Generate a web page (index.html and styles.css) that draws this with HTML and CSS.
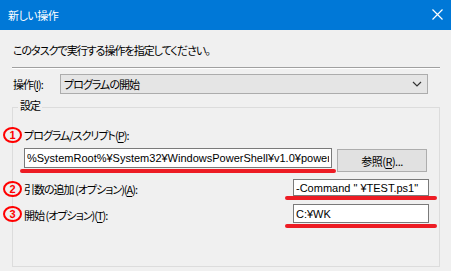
FILE: index.html
```html
<!DOCTYPE html>
<html lang="ja">
<head>
    <meta charset="UTF-8">
    <title>新しい操作</title>
    <link rel="stylesheet" href="styles.css">
</head>
<body>
    <div class="title-bar">
        <span class="title">新しい操作</span>
        <svg class="close-icon" width="11" height="11" viewBox="0 0 11 11">
            <path d="M0.5 0.5 L10.5 10.5 M10.5 0.5 L0.5 10.5" stroke="#fff" stroke-width="1.2" fill="none"/>
        </svg>
    </div>

    <div class="content">
        <div class="desc">このタスクで実行する操作を指定してください。</div>
        <div class="separator"></div>

        <div class="action-row">
            <span class="action-label">操作(<u>I</u>):</span>
            <div class="combo">
                <span>プログラムの開始</span>
                <svg class="combo-arrow" width="10" height="6" viewBox="0 0 10 6">
                    <path d="M1 1 L5 5 L9 1" stroke="#333" stroke-width="1.2" fill="none"/>
                </svg>
            </div>
        </div>

        <fieldset class="group">
            <legend>設定</legend>

            <div class="field-label">
                <span class="mark">1</span>
                プログラム/スクリプト(<u>P</u>):
            </div>
            <div class="program-row">
                <input class="text-box program-box" type="text" readonly value="%SystemRoot%¥System32¥WindowsPowerShell¥v1.0¥powershell.exe">
                <button class="browse-button">参照(<u>R</u>)...</button>
                <span class="underline line-program"></span>
            </div>

            <div class="option-row args-row">
                <span class="mark mark-row">2</span>
                <span class="option-label">引数の追加 (オプション)(<u>A</u>):</span>
                <input class="text-box option-box" type="text" readonly value="-Command &quot; ¥TEST.ps1&quot;">
                <span class="underline line-option"></span>
            </div>

            <div class="option-row start-row">
                <span class="mark mark-row">3</span>
                <span class="option-label">開始 (オプション)(<u>T</u>):</span>
                <input class="text-box option-box start-box" type="text" readonly value="C:¥WK">
                <span class="underline line-option line-start"></span>
            </div>
        </fieldset>
    </div>
</body>
</html>
```

FILE: styles.css
```css
* {
    margin: 0;
    padding: 0;
    box-sizing: border-box;
    font-family: "Noto Sans CJK JP", "Noto Sans", sans-serif;
    font-feature-settings: "palt";
}

body {
    width: 451px;
    height: 271px;
    overflow: hidden;
    background-color: #f0f0f0;
    font-size: 11px;
    letter-spacing: -1px;
    color: #000;
}

u {
    text-decoration: underline;
    text-underline-offset: 2px;
}

/* Title bar */
.title-bar {
    height: 30px;
    background-color: #0078d7;
    color: #fff;
    display: flex;
    align-items: center;
    justify-content: space-between;
    padding: 0 8px 0 8px;
}

.title {
    line-height: 16px;
    letter-spacing: -0.5px;
}

.close-icon {
    margin-bottom: 1px;
}

.content {
    padding-left: 12px;
}

.desc {
    margin-top: 12px;
    line-height: 16px;
    padding-left: 1px;
}

.separator {
    margin-top: 9px;
    width: 428px;
    border-top: 1px solid #a0a0a0;
    border-bottom: 1px solid #fff;
}

/* Action select */
.action-row {
    margin-top: 5px;
    display: flex;
    align-items: center;
    height: 20px;
}

.action-label {
    width: 48px;
    padding-left: 1px;
    line-height: 20px;
}

.combo {
    width: 368px;
    height: 20px;
    background-color: #e5e5e5;
    border: 1px solid #acacac;
    display: flex;
    align-items: center;
    justify-content: space-between;
    padding: 0 5px 0 3px;
    line-height: 18px;
}

/* Settings group */
.group {
    margin-top: 3px;
    width: 428px;
    height: 170px;
    border: 1px solid #dcdcdc;
    padding: 0 10px 0 11px;
    min-width: 0;
}

.group legend {
    margin-left: -6px;
    padding: 0 2px 4px 2px;
    line-height: 16px;
}

.field-label {
    position: relative;
    margin-top: 10px;
    line-height: 16px;
}

.program-row {
    position: relative;
    margin-top: 5px;
    display: flex;
    align-items: flex-start;
    height: 24px;
}

.text-box {
    background-color: #fff;
    border: 1px solid #7a7a7a;
    font-family: "Liberation Sans", "Noto Sans CJK JP", sans-serif;
    font-size: 11px;
    letter-spacing: 0;
    color: #000;
    padding: 0 2px;
    outline: none;
}

.program-box {
    width: 308px;
    height: 20px;
}

.browse-button {
    margin-left: 5px;
    margin-top: 1px;
    width: 90px;
    height: 23px;
    background-color: #e1e1e1;
    border: 1px solid #adadad;
    font-size: 11px;
    letter-spacing: -0.5px;
    color: #000;
}

.option-row {
    position: relative;
    display: flex;
    align-items: center;
    justify-content: space-between;
}

.args-row {
    margin-top: 7px;
    height: 17px;
}

.start-row {
    margin-top: 8px;
    height: 19px;
}

.option-label {
    line-height: 16px;
    padding-top: 2px;
}

.option-box {
    width: 136px;
    height: 100%;
    line-height: 15px;
}

/* Red annotations */
.mark {
    position: absolute;
    left: -21px;
    top: 0;
    width: 19px;
    height: 16px;
    border: 2px solid #ff0000;
    border-radius: 50%;
    color: #ff0000;
    font-family: "Liberation Sans", sans-serif;
    font-size: 11px;
    font-weight: bold;
    letter-spacing: 0;
    line-height: 12px;
    text-align: center;
}

.mark-row {
    top: 2px;
}

.underline {
    position: absolute;
    height: 4px;
    background-color: #ed1c24;
    border-radius: 2px;
}

.line-program {
    left: -4px;
    top: 21px;
    width: 316px;
}

.line-option {
    left: 261px;
    top: 17px;
    width: 152px;
}

.line-start {
    top: 20px;
}
```
